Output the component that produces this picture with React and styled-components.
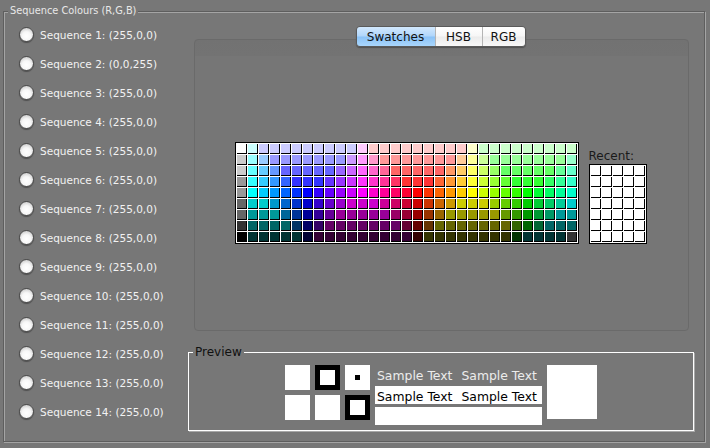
import React from 'react'
import styled, { createGlobalStyle } from 'styled-components'

const GlobalStyle = createGlobalStyle`
  html, body {
    margin: 0;
    padding: 0;
    background: #777777;
  }
  body {
    width: 710px;
    height: 448px;
    overflow: hidden;
    font-family: "DejaVu Sans", "Liberation Sans", sans-serif;
  }
`

// java's default swatch palette, each colour as three base-6 digits (x51)
const swatchRows = [
  '555 455 445*9 545 544*9 554 454*9',
  '444 355 345 335*7 435 535 534 533*7 543 553 453 353*7 354',
  '444 255 245 235 225*5 325 425 525 524 523 522*5 532 542 552 452 352 252*5 253 254',
  '333 155 145 135 125 115*3 215 315 415 515 514 513 512 511*3 521 531 541 551 451 351 251 151*3 152 153 154',
  '333 055 045 035 025 015 005 105 205 305 405 505 504 503 502 501 500 510 520 530 540 550 450 350 250 150 050 051 052 053 054',
  '222 044 044 034 024 014 004 104 204 304 404 404 404 403 402 401 400 410 420 430 440 440 440 340 240 140 040 041 042 043 044',
  '222 033*3 023 013 003 103 203 303*5 302 301 300 310 320 330*5 230 130 030 031 032 033 033',
  '111 022*4 012 002 102 202*7 201 200 210 220*7 120 020 021 022*3',
  '000 011*5 001 101*9 100 110*8 010 011*4 111',
]

const toRgb = code => `rgb(${code.split('').map(d => Number(d) * 51).join(',')})`

const swatches = swatchRows.flatMap(row =>
  row.split(' ').flatMap(token => {
    const [code, times] = token.split('*')
    return Array(Number(times || 1)).fill(toRgb(code))
  })
)

const sequences = Array.from({ length: 14 }, (_, i) => ({
  id: i + 1,
  rgb: i === 1 ? '0,0,255' : '255,0,0',
}))

const Frame = styled.fieldset`
  box-sizing: border-box;
  width: 702px;
  height: 437px;
  margin: 5px 0 0 3px;
  padding: 0;
  border: 1px solid #5e5e5e;
  box-shadow: 1px 1px 0 #a4a4a4, inset 1px 1px 0 #a4a4a4;
`

const FrameTitle = styled.legend`
  margin-left: 4px;
  padding: 0 2px;
  font-size: 9.8px;
  line-height: 12px;
  color: #e8e8e8;
  background: #777777;
`

const Layout = styled.div`
  display: grid;
  grid-template-columns: 184px 506px;
`

const RadioList = styled.div`
  display: flex;
  flex-direction: column;
  padding: 3px 0 0 15px;
`

const RadioRow = styled.label`
  display: flex;
  align-items: center;
  gap: 6px;
  height: 29px;
  font-size: 10.5px;
  color: #f2f2f2;
`

const RadioDot = styled.span`
  flex: none;
  box-sizing: border-box;
  width: 15px;
  height: 15px;
  border-radius: 50%;
  border: 1px solid #4a4a4a;
  background: radial-gradient(circle at 50% 62%, #ffffff 0%, #f7f7f7 42%, #d2d2d2 76%, #a8a8a8 100%);
  box-shadow: 0 1px 1px rgba(0, 0, 0, 0.35);
`

const RightColumn = styled.div`
  display: flex;
  flex-direction: column;
  padding-top: 9px;
`

const TabStrip = styled.div`
  display: flex;
  justify-content: center;
  margin: 0 6px -8px 5px;
  position: relative;
  z-index: 1;
`

const TabGroup = styled.div`
  display: flex;
  box-sizing: border-box;
  height: 21px;
  border: 1px solid #5a5a5a;
  border-radius: 4px;
  overflow: hidden;
  box-shadow: 0 1px 1px rgba(0, 0, 0, 0.3);
`

const Tab = styled.div`
  box-sizing: border-box;
  width: ${p => p.$width}px;
  display: flex;
  align-items: center;
  justify-content: center;
  font-size: 12px;
  color: #111;
  border-left: ${p => (p.$first ? 'none' : '1px solid #b4b4b4')};
  background: ${p =>
    p.$active
      ? 'linear-gradient(#d2e8fd 0%, #b0d6fb 48%, #8ac2f7 52%, #a9d6fc 100%)'
      : 'linear-gradient(#ffffff 0%, #f6f6f6 48%, #ebebeb 52%, #f8f8f8 100%)'};
`

const TabPanel = styled.div`
  box-sizing: border-box;
  height: 292px;
  margin: 0 5px 0 6px;
  padding: 102px 2px 0 0;
  border: 1px solid #6a6a6a;
  border-radius: 4px;
  background: linear-gradient(#727272 0, #737373 16px, #767676 16px);
`

const SwatchRow = styled.div`
  display: flex;
  justify-content: center;
  align-items: flex-end;
  gap: 10px;
`

const SwatchGrid = styled.div`
  display: grid;
  grid-template-columns: repeat(${p => p.$cols}, 10px);
  grid-auto-rows: 10px;
  gap: 1px;
  padding: 1px;
  border: 1px solid #000;
  background: #fff;
`

const Swatch = styled.div`
  box-sizing: border-box;
  border-right: 1px solid #000;
  border-bottom: 1px solid #000;
`

const RecentColumn = styled.div`
  display: flex;
  flex-direction: column;
  gap: 1px;
`

const RecentLabel = styled.div`
  font-size: 12px;
  line-height: 14px;
  color: #1a1a1a;
`

const Preview = styled.fieldset`
  margin: 15px 0 0 0;
  padding: 7px 0 5px;
  border: 1px solid #ffffff;
  box-shadow: 1px 1px 0 #a8a8a8;
`

const PreviewTitle = styled.legend`
  margin-left: 4px;
  padding: 0 2px;
  font-size: 12px;
  line-height: 12px;
  color: #111;
`

const PreviewRow = styled.div`
  display: flex;
  justify-content: center;
  align-items: flex-start;
  gap: 5px;
`

const SquareGrid = styled.div`
  display: grid;
  grid-template-columns: repeat(3, 25px);
  grid-auto-rows: 25px;
  gap: 5px;
`

const Square = styled.div`
  box-sizing: border-box;
  display: flex;
  align-items: center;
  justify-content: center;
  background: #fff;
  border: ${p => (p.$framed ? '5px solid #000' : 'none')};
`

const Dot = styled.span`
  width: 5px;
  height: 5px;
  background: #000;
`

const TextBlock = styled.div`
  display: flex;
  flex-direction: column;
  width: 167px;
`

const SampleLine = styled.div`
  box-sizing: border-box;
  display: flex;
  gap: 9px;
  height: ${p => p.$height}px;
  margin-top: ${p => p.$gap || 0}px;
  padding: 4px 0 0 2px;
  font-size: 12.4px;
  line-height: 14px;
  white-space: nowrap;
  color: ${p => (p.$filled ? '#000' : '#ececec')};
  background: ${p => (p.$filled ? '#fff' : 'transparent')};
`

const BigSquare = styled.div`
  width: 50px;
  height: 54px;
  background: #fff;
`

export default function App() {
  return (
    <>
      <GlobalStyle />
      <Frame>
        <FrameTitle>Sequence Colours (R,G,B)</FrameTitle>
        <Layout>
          <RadioList>
            {sequences.map(s => (
              <RadioRow key={s.id}>
                <RadioDot />
                Sequence {s.id}: ({s.rgb})
              </RadioRow>
            ))}
          </RadioList>

          <RightColumn>
            <TabStrip>
              <TabGroup>
                <Tab $width={78} $first $active>Swatches</Tab>
                <Tab $width={47}>HSB</Tab>
                <Tab $width={43}>RGB</Tab>
              </TabGroup>
            </TabStrip>
            <TabPanel>
              <SwatchRow>
                <SwatchGrid $cols={31}>
                  {swatches.map((c, i) => (
                    <Swatch key={i} style={{ background: c }} />
                  ))}
                </SwatchGrid>
                <RecentColumn>
                  <RecentLabel>Recent:</RecentLabel>
                  <SwatchGrid $cols={5}>
                    {Array.from({ length: 35 }, (_, i) => (
                      <Swatch key={i} />
                    ))}
                  </SwatchGrid>
                </RecentColumn>
              </SwatchRow>
            </TabPanel>

            <Preview>
              <PreviewTitle>Preview</PreviewTitle>
              <PreviewRow>
                <SquareGrid>
                  <Square />
                  <Square $framed />
                  <Square><Dot /></Square>
                  <Square />
                  <Square />
                  <Square $framed />
                </SquareGrid>
                <TextBlock>
                  <SampleLine $height={21}>
                    <span>Sample Text</span>
                    <span>Sample Text</span>
                  </SampleLine>
                  <SampleLine $height={18} $filled>
                    <span>Sample Text</span>
                    <span>Sample Text</span>
                  </SampleLine>
                  <SampleLine $height={18} $gap={3} $filled />
                </TextBlock>
                <BigSquare />
              </PreviewRow>
            </Preview>
          </RightColumn>
        </Layout>
      </Frame>
    </>
  )
}
